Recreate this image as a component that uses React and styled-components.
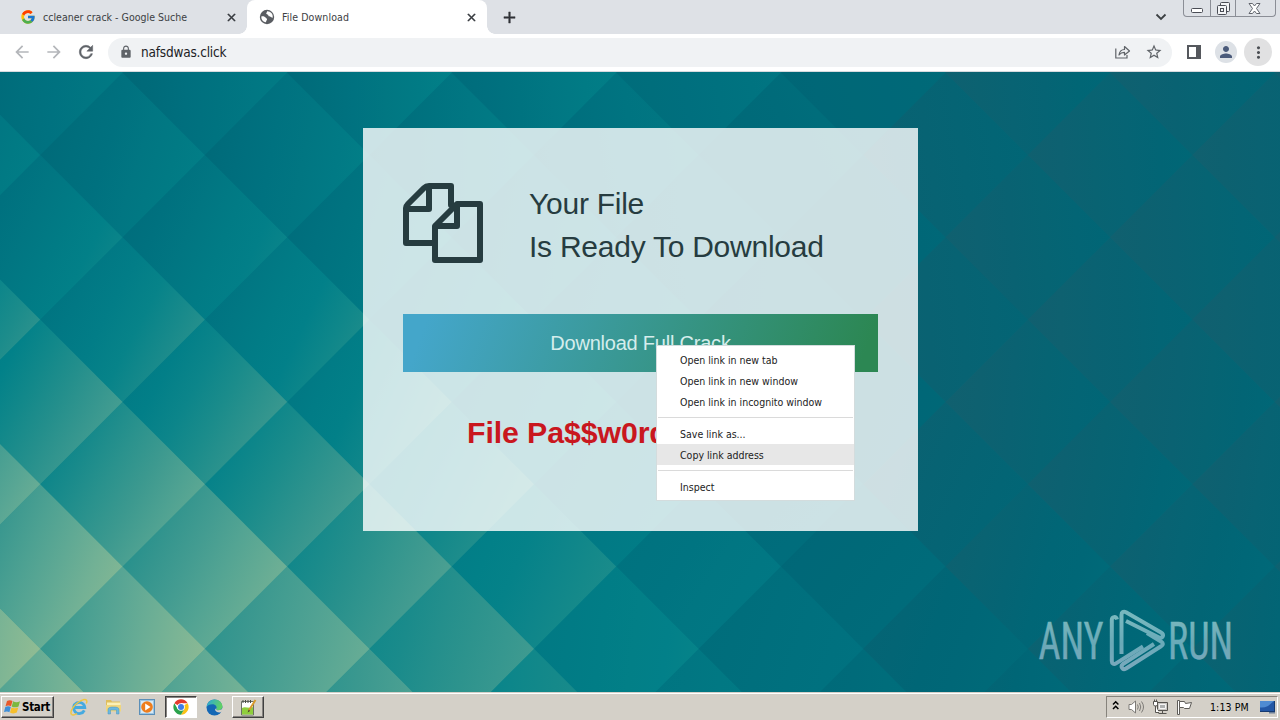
import React from 'react'
import styled, { createGlobalStyle, css } from 'styled-components'
import { FcGoogle } from 'react-icons/fc'
import {
    MdArrowBack,
    MdArrowForward,
    MdRefresh,
    MdLock,
    MdStarBorder,
    MdPerson,
    MdMoreVert,
    MdClose,
    MdAdd,
} from 'react-icons/md'

const GlobalStyle = createGlobalStyle`
    * {
        box-sizing: border-box;
    }
    body {
        margin: 0;
        overflow: hidden;
        font-family: 'DejaVu Sans Condensed', 'DejaVu Sans', sans-serif;
        font-stretch: condensed;
        font-size: 10.5px;
        color: #222;
    }
    svg {
        display: block;
        flex-shrink: 0;
    }
`

const Screen = styled.div`
    width: 1280px;
    height: 720px;
    display: flex;
    flex-direction: column;
    overflow: hidden;
`

/* ---------- browser chrome ---------- */

const TabStrip = styled.div`
    height: 34px;
    background: #dee1e6;
    display: flex;
    align-items: stretch;
`

const Tab = styled.div`
    position: relative;
    display: flex;
    align-items: center;
    width: ${(p) => (p.$active ? 240 : 247)}px;
    padding: 0 9px 0 ${(p) => (p.$active ? 12 : 20)}px;
    background: ${(p) => (p.$active ? '#fff' : 'transparent')};
    border-radius: 8px 8px 0 0;
    color: #3c4043;
    ${(p) =>
        p.$active &&
        css`
            /* little feet that flow into the toolbar */
            &::before,
            &::after {
                content: '';
                position: absolute;
                bottom: 0;
                width: 8px;
                height: 8px;
            }
            &::before {
                left: -8px;
                background: radial-gradient(circle at 0 0, #dee1e6 7.5px, #fff 8px);
            }
            &::after {
                right: -8px;
                background: radial-gradient(circle at 100% 0, #dee1e6 7.5px, #fff 8px);
            }
        `}
    > svg:last-child {
        margin-left: auto;
    }
    > svg:last-child path:last-child {
        stroke: #33363b;
        stroke-width: 1px;
    }
`

const TabTitle = styled.span`
    margin-left: 7px;
    line-height: 34px;
    white-space: nowrap;
    letter-spacing: ${(p) => p.$track || 0}px;
`

const NewTab = styled.div`
    width: 44px;
    display: grid;
    place-items: center;
    color: #303238;
    path:last-child {
        stroke: #303238;
        stroke-width: 0.6px;
    }
`

const StripEnd = styled.div`
    margin-left: auto;
    display: flex;
    margin-right: 4px;
    gap: 16px;
    > svg {
        margin-top: 11px;
    }
`

const WindowButtons = styled.div`
    display: grid;
    grid-template-columns: 26px 25px 42px;
    width: 93px;
    height: 17px;
    border: 1px solid #8b8e96;
    border-top: 0;
    border-radius: 0 0 4px 4px;
    > div {
        display: grid;
        place-items: center;
    }
    > div + div {
        border-left: 1px solid #8b8e96;
    }
`

const Toolbar = styled.div`
    height: 38px;
    background: #fff;
    border-bottom: 1px solid #d7dade;
    display: flex;
    align-items: center;
    padding: 0 8px 1px 12px;
`

const NavIcons = styled.div`
    display: flex;
    align-items: center;
    gap: 12px;
    width: 96px;
    color: #5f6368;
    .dim {
        color: #b4b6ba;
    }
    > svg:last-child path:last-child {
        stroke: #5f6368;
        stroke-width: 0.6px;
    }
`

const Omnibox = styled.div`
    flex: 1;
    height: 29px;
    border-radius: 15px;
    background: #f0f2f4;
    display: flex;
    align-items: center;
    padding: 0 9px 0 11px;
    color: #5f6368;
    .star {
        margin-left: 14px;
    }
`

const Url = styled.span`
    flex: 1;
    margin-left: 8px;
    font-size: 13.5px;
    letter-spacing: -0.2px;
    color: #202124;
`

const RoundButton = styled.div`
    width: ${(p) => p.$size}px;
    height: ${(p) => p.$size}px;
    border-radius: 50%;
    display: grid;
    place-items: center;
    background: ${(p) => p.$bg};
    color: ${(p) => p.$color};
    margin-left: ${(p) => p.$gap}px;
`

/* ---------- page ---------- */

const Page = styled.main`
    position: relative;
    height: 620px;
    padding-top: 56px;
    overflow: hidden;
    background: #00747f;
    > .wallpaper {
        position: absolute;
        inset: 0;
    }
`

const Card = styled.section`
    position: relative;
    width: 555px;
    height: 403px;
    margin-left: 363px;
    padding: 54px 40px 0;
    background: rgba(255, 255, 255, 0.8);
    font-family: 'Liberation Sans', Arial, sans-serif;
`

const CardHead = styled.div`
    display: flex;
    height: 132px;
    > svg {
        margin-top: 1px;
    }
`

const Heading = styled.h1`
    margin: 0 0 0 46px;
    font-size: 30px;
    font-weight: 400;
    line-height: 43px;
    letter-spacing: -0.25px;
    color: #263c40;
    white-space: pre-line;
`

const DownloadButton = styled.div`
    height: 58px;
    line-height: 58px;
    text-align: center;
    font-size: 20px;
    letter-spacing: -0.22px;
    color: #d5edec;
    background: linear-gradient(110deg, #44a6ca 5%, #2c8753 96%);
`

const Password = styled.p`
    margin: 43px 0 0 64px;
    line-height: 36px;
    font-size: 30.3px;
    font-weight: 700;
    letter-spacing: -0.1px;
    color: #c9171e;
`

const Menu = styled.div`
    position: absolute;
    left: 656px;
    top: 273px;
    width: 199px;
    height: 156px;
    padding: 3px 0 2px;
    background: #fff;
    border: 1px solid #d3dcdd;
`

const MenuItem = styled.div`
    height: 21px;
    line-height: 20px;
    padding: 1px 0 0 23px;
    color: #1c1c1c;
    white-space: nowrap;
    background: ${(p) => (p.$hover ? '#e7e7e7' : 'transparent')};
`

const Separator = styled.hr`
    margin: 5px 1px;
    border: 0;
    height: 1px;
    background: #dadada;
`

const Watermark = styled.div`
    position: absolute;
    left: 1036px;
    top: 534px;
    opacity: 0.75;
`

/* ---------- taskbar ---------- */

const raised = css`
    border: 1px solid;
    border-color: #fff #404040 #404040 #fff;
    box-shadow: inset -1px -1px 0 #868380;
`

const Taskbar = styled.footer`
    height: 28px;
    background: #d4d0c8;
    border-top: 1px solid #d4d0c8;
    box-shadow: inset 0 1px 0 #fff;
    display: flex;
    align-items: flex-start;
    padding: 3px 2px 0 1px;
`

const StartButton = styled.div`
    ${raised}
    width: 53px;
    height: 22px;
    margin-right: 8px;
    display: flex;
    align-items: center;
    padding-left: 2px;
    font-weight: 700;
    font-size: 11.5px;
    letter-spacing: -0.3px;
    color: #000;
`

const Launcher = styled.div`
    width: 34px;
    height: 22px;
    display: grid;
    place-items: center;
`

const TaskButton = styled(Launcher)`
    width: 32px;
    margin-left: 1px;
    ${(p) =>
        p.$pressed
            ? css`
                  background: #fff;
                  border: 1px solid;
                  border-color: #404040 #fff #fff #404040;
                  box-shadow: inset 1px 1px 0 #868380;
              `
            : raised}
`

const Tray = styled.div`
    margin-left: auto;
    width: 172px;
    height: 22px;
    display: flex;
    align-items: center;
    border: 1px solid;
    border-color: #86837c #fff #fff #86837c;
    padding-left: 5px;
    font-size: 10.5px;
    color: #000;
`

const Clock = styled.span`
    width: 60px;
    padding-left: 17px;
    white-space: nowrap;
    letter-spacing: 0.1px;
`

/* ---------- wallpaper ---------- */

const RAMP = [
    [0, [21, 94, 109]],
    [0.15, [0, 102, 118]],
    [0.3, [0, 113, 127]],
    [0.5, [2, 129, 137]],
    [0.6, [28, 140, 139]],
    [0.7, [58, 152, 143]],
    [0.8, [88, 166, 148]],
    [0.9, [120, 179, 149]],
    [1, [148, 189, 147]],
    [1.1, [166, 194, 148]],
]

function ramp(t) {
    if (t <= 0) t = 0
    for (let i = 1; i < RAMP.length; i++) {
        const [t1, c1] = RAMP[i]
        const [t0, c0] = RAMP[i - 1]
        if (t <= t1) {
            const f = (t - t0) / (t1 - t0)
            return `rgb(${c0.map((v, k) => Math.round(v + (c1[k] - v) * f)).join(',')})`
        }
    }
    return 'rgb(166,194,148)'
}

// coarse light map of the wallpaper, sampled bilinearly
const XS = [0, 200, 450, 620, 780, 950, 1280]
const YS = [0, 128, 248, 378, 494, 618]
const LIGHT = [
    [0.29, 0.3, 0.36, 0.34, 0.24, 0.11, 0.09],
    [0.35, 0.35, 0.34, 0.3, 0.2, 0.1, 0.09],
    [0.5, 0.48, 0.43, 0.33, 0.18, 0.09, 0.09],
    [0.66, 0.62, 0.53, 0.38, 0.21, 0.09, 0.1],
    [0.8, 0.76, 0.61, 0.44, 0.26, 0.13, 0.12],
    [0.86, 0.84, 0.66, 0.46, 0.29, 0.17, 0.14],
]

function locate(arr, v) {
    const c = Math.min(Math.max(v, arr[0]), arr[arr.length - 1])
    let i = 0
    while (i < arr.length - 2 && c > arr[i + 1]) i++
    return [i, (c - arr[i]) / (arr[i + 1] - arr[i])]
}

function light(x, y) {
    const [i, fx] = locate(XS, x)
    const [j, fy] = locate(YS, y)
    const a = LIGHT[j][i] * (1 - fx) + LIGHT[j][i + 1] * fx
    const b = LIGHT[j + 1][i] * (1 - fx) + LIGHT[j + 1][i + 1] * fx
    return a * (1 - fy) + b * fy
}

const STEP = 82.3
const DIAMONDS = []
for (let i = -1; i < 17; i++) {
    for (let j = -2; j < 9; j++) {
        if ((i + j) % 2 === 0) continue
        DIAMONDS.push({ id: `d${i}_${j + 2}`, x: 40.6 + i * STEP, y: 83 + j * STEP })
    }
}

function Wallpaper() {
    return (
        <svg className="wallpaper" width="1280" height="620">
            {DIAMONDS.map(({ id, x, y }) => {
                const mid = light(x, y)
                const amp = Math.min(0.15, 0.04 + mid * 0.25)
                const gx = (light(x + STEP, y) - light(x - STEP, y)) / 2 + amp
                const gy = ((light(x, y + STEP) - light(x, y - STEP)) / 2) * 0.8
                const len = Math.hypot(gx, gy) || 0.01
                const ux = gx / len
                const uy = gy / len
                return (
                    <g key={id}>
                        <linearGradient
                            id={id}
                            gradientUnits="userSpaceOnUse"
                            x1={x - ux * STEP}
                            y1={y - uy * STEP}
                            x2={x + ux * STEP}
                            y2={y + uy * STEP}
                        >
                            {[0, 0.2, 0.4, 0.6, 0.8, 1].map((s) => (
                                <stop key={s} offset={s} stopColor={ramp(mid + (s * 2 - 1) * len)} />
                            ))}
                        </linearGradient>
                        <path
                            d={`M${x - STEP - 0.4} ${y}L${x} ${y - STEP - 0.4}L${x + STEP + 0.4} ${y}L${x} ${y + STEP + 0.4}Z`}
                            fill={`url(#${id})`}
                        />
                    </g>
                )
            })}
        </svg>
    )
}

/* ---------- drawings ---------- */

const GlobeIcon = () => (
    <svg width="16" height="16" viewBox="0 0 16 16">
        <circle cx="8" cy="8" r="7.200" fill="#5a5d62" />
        <path d="M2.300 7.500C4 7 6 7.500 7 9C8 9.500 8.500 10.500 7.500 11.500C7 12.500 7 13.500 6.300 13.300C3.800 12.700 2 10.500 2.300 7.500Z" fill="#fff" />
        <path d="M8 2.200C9.500 2 11.500 2.800 12.600 4.200C13.600 5.400 13.900 7 13.700 8.600C12.700 9.300 12.500 8 11.500 7.800C10.300 7.600 9.500 7.500 9.300 6.300C9.300 5.300 7.500 5.500 7.200 4.500C7 3.500 8.500 3.300 8 2.200Z" fill="#fff" />
    </svg>
)

const FilesIcon = () => (
    <svg
        width="80"
        height="80"
        viewBox="0 0 80 80"
        fill="none"
        stroke="#263c40"
        strokeWidth="6"
        strokeLinejoin="round"
        strokeLinecap="round"
    >
        <path d="M30 60H3V25C3 24 4 22 5 21L21 5C22 4 24 3 26 3H48V22" />
        <path d="M26 4V26H4" />
        <path d="M32 43L54 21H77V77H32Z" />
        <path d="M54 22V43H33" />
    </svg>
)

const WatermarkLogo = () => (
    <svg width="240" height="70" viewBox="0 0 240 70">
        <defs>
            <linearGradient id="wm" x1="0" y1="0" x2="0" y2="68" gradientUnits="userSpaceOnUse">
                <stop offset="0.2" stopColor="#9fd2d6" />
                <stop offset="0.55" stopColor="#8cc0ce" />
                <stop offset="0.9" stopColor="#a2bfd4" />
            </linearGradient>
        </defs>
        <g fill="url(#wm)" stroke="url(#wm)" strokeWidth="0.4" fontFamily="Roboto, sans-serif" fontSize="52">
            <text x="2.500" y="53" textLength="65" lengthAdjust="spacingAndGlyphs">
                ANY
            </text>
            <text x="132" y="53" textLength="65" lengthAdjust="spacingAndGlyphs">
                RUN
            </text>
        </g>
        <g fill="none" stroke="url(#wm)" strokeWidth="4" strokeLinejoin="round">
            <path d="M81 13.500C80 10 75.800 10.500 75.800 14V55C75.800 58 78 58.600 80 57.400L107 40.500" />
            <path d="M85.500 48V9C85.500 6 87.500 5 90 6.200L125 26.500C128.500 28.500 127 33 123 31.500L90 15" />
            <path d="M111 27L125 35.500C127.500 37 127.500 38.800 125 40.300L90 62.500C86.500 64.500 84 60.500 87 58L118 38" />
        </g>
    </svg>
)

const ShareIcon = () => (
    <svg width="16" height="16" viewBox="0 0 16 16" fill="none" stroke="#5f6368" strokeWidth="1.2">
        <path d="M.8 4.500V14H12V11" />
        <path d="M4 11C4.500 7.500 6.500 5.500 9.500 5.500V2.500L14.500 7L9.500 11V8.300C7 8.200 5.500 9 4 11Z" strokeLinejoin="round" />
    </svg>
)

const SidePanelIcon = () => (
    <svg width="14" height="14" viewBox="0 0 14 14">
        <path d="M1 1H13V13H1Z" fill="none" stroke="#55585d" strokeWidth="2" />
        <path d="M9 0H14V14H9Z" fill="#55585d" />
    </svg>
)

const MinimizeIcon = () => (
    <svg width="12" height="5" style={{ marginTop: 5 }}>
        <rect x="0.500" y="0.500" width="11" height="4" rx="1" fill="#fff" stroke="#4a4d55" />
    </svg>
)

const RestoreIcon = () => (
    <svg width="13" height="13" fill="#f3f4f6" stroke="#4a4d55">
        <rect x="3.500" y="0.500" width="9" height="9" rx="1" />
        <rect x="0.500" y="3.500" width="9" height="9" rx="1" />
        <rect x="3.500" y="6.500" width="3" height="3" />
    </svg>
)

const CloseWindowIcon = () => (
    <svg width="13" height="11" viewBox="0 0 13 11" fill="#fff" stroke="#62656d" style={{ marginRight: 4 }}>
        <path d="M1 .5H4.500L6.500 3L8.500 .5H12L8.500 5.500L12 10.500H8.500L6.500 8L4.500 10.500H1L4.500 5.500Z" />
    </svg>
)

const WindowsFlag = () => (
    <svg width="18" height="16" viewBox="0 0 18 16">
        <path d="M3 2C5 .8 7 1 8.500 2L7 7.300C5.500 6.300 3.500 6.200 1.500 7.200Z" fill="#e8592a" />
        <path d="M9.200 2.300C11 3.400 13.500 3.500 16 2.300L14.500 7.500C12 8.700 9.500 8.600 7.700 7.500Z" fill="#7cb83f" />
        <path d="M1.300 8C3.500 7 5.300 7.200 6.800 8.100L5.400 13.200C4 12.200 2 12.100 0 13.100Z" fill="#3f8fd8" />
        <path d="M7.500 8.400C9.500 9.500 12 9.500 14.300 8.400L12.800 13.600C10.500 14.800 8 14.600 6 13.500Z" fill="#f6bf2d" />
    </svg>
)

const IeIcon = () => (
    <svg width="18" height="18" viewBox="0 0 18 18" fill="none">
        <path d="M14.300 12.300A5.600 5.600 0 1 1 14.800 9.500H5" stroke="#45aae0" strokeWidth="2.800" />
        <path d="M1.500 16.500C-1 13 6 4 13 1.800C17 .8 17.500 3 16.300 5.500" stroke="#f0c63f" strokeWidth="1.400" />
        <path d="M1.500 16.500C3 17.600 5.500 16.500 7 15.500" stroke="#f0c63f" strokeWidth="1.400" />
    </svg>
)

const FolderIcon = () => (
    <svg width="17" height="16" viewBox="0 0 17 16">
        <path d="M1 1H6L7 2.500H15V12H1Z" fill="#dfbd5c" />
        <path d="M2 3.500H15.500V8H2Z" fill="#fbf0b6" />
        <path d="M1 6H16V12.500H1Z" fill="#f0d67e" />
        <path d="M3 15V10.500C3 8.500 5 8 8.500 8S14 8.500 14 10.500V15H11.500V11H5.500V15Z" fill="#6cb8df" stroke="#4b95bd" strokeWidth=".5" />
    </svg>
)

const PlayerIcon = () => (
    <svg width="16" height="16" viewBox="0 0 16 16">
        <rect x=".5" y=".5" width="15" height="15" fill="#9cc6e4" stroke="#5b8fb8" />
        <rect x="2" y="2" width="12" height="12" fill="#d8e9f4" />
        <circle cx="8" cy="8" r="5.800" fill="#ee7d1c" />
        <path d="M6.200 4.600L11.500 8L6.200 11.400Z" fill="#fff" />
    </svg>
)

const ChromeIcon = () => (
    <svg width="16" height="16" viewBox="0 0 48 48">
        <path d="M24 24L4.100 12.500A23 23 0 0 1 43.900 12.500H24Z" fill="#e33b2e" />
        <path d="M24 24L43.900 12.500A23 23 0 0 1 24 47L34 30Z" fill="#fbc116" />
        <path d="M24 24L24 47A23 23 0 0 1 4.100 12.500L14 30L34 30L24 47Z" fill="#2ba24c" />
        <circle cx="24" cy="24" r="11.500" fill="#fff" />
        <circle cx="24" cy="24" r="9" fill="#3f7de8" />
    </svg>
)

const EdgeIcon = () => (
    <svg width="17" height="17" viewBox="0 0 17 17">
        <defs>
            <linearGradient id="edge" x1="0" y1="0" x2="1" y2="0.300">
                <stop offset="0" stopColor="#2ba6dc" />
                <stop offset="1" stopColor="#61d065" />
            </linearGradient>
        </defs>
        <circle cx="8.500" cy="8.500" r="8" fill="#1467b5" />
        <path d="M.6 8C1 3.500 4.500 .5 8.500 .5C13 .5 16.500 3.800 16.500 7.600C16.500 10 14.500 11.300 12.300 11.300C10.500 11.300 9.800 10.600 10.500 9.500C11 7.500 9.500 5.200 6.500 5.200C3.500 5.200 1.300 6.500 .6 8Z" fill="url(#edge)" />
        <path d="M10.500 9.500C9.800 10.600 10.500 11.300 12.300 11.300C14.500 11.300 16.500 10.400 17 8V11.500L15.500 13C13.500 14 10.500 13.500 9.300 11.500C8.800 10.300 9.500 9 10.500 9.500Z" fill="#d4d0c8" />
    </svg>
)

const NotepadIcon = () => (
    <svg width="17" height="17" viewBox="0 0 17 17">
        <path d="M1.500 2.500H13.500V16H1.500Z" fill="#fff" stroke="#6b6f66" />
        <path d="M2 9C5 7 9 10 13 8V15.500H2Z" fill="#8fce3c" />
        <path d="M3 1V4M5.500 1V4M8 1V4M10.500 1V4" stroke="#4a4f48" />
        <path d="M15.500 1L8.500 12" stroke="#d99b2b" strokeWidth="2" />
        <path d="M8.800 10.500L7.600 13.500L10 12Z" fill="#3b3b30" />
    </svg>
)

const TrayIcons = () => (
    <>
        <svg width="8" height="11" viewBox="0 0 8 11" fill="none" stroke="#000" strokeWidth="1.500" style={{ marginBottom: 3 }}>
            <path d="M1 4.500L3.700 1.800L6.400 4.500M1 9L3.700 6.300L6.400 9" />
        </svg>
        <svg width="17" height="14" viewBox="0 0 17 14" fill="none" stroke="#7c7a76" style={{ marginLeft: 8 }}>
            <path d="M1 4.500H3.500L7.500 1V13L3.500 9.500H1Z" fill="#fff" />
            <path d="M9.500 4.500Q11 7 9.500 9.500M11.500 3Q14 7 11.500 11M13.500 1.500Q17.500 7 13.500 12.500" />
        </svg>
        <svg width="17" height="16" viewBox="0 0 17 16" fill="none" stroke="#55534f" style={{ marginLeft: 7 }}>
            <path d="M5.500 3.500H15.500V11.500H5.500Z" fill="#c9c7c3" />
            <path d="M7.500 5.500H13.500V9.500H7.500Z" fill="#aeb0b0" stroke="#f6f6f6" />
            <path d="M10.500 12V14M6.500 14.500H14.500" />
            <path d="M1.500 2.500H5.500V5.500L4.500 7H2.500L1.500 5.500ZM2.500 .5V2.500M4.500 .5V2.500M3.500 7V13.500H7" fill="#fff" />
        </svg>
        <svg width="17" height="15" viewBox="0 0 17 15" stroke="#5e5c58" style={{ marginLeft: 7 }}>
            <path d="M1.500 .5H3.500V14.500H1.500Z" fill="#fff" />
            <path d="M3.500 1.500H8.500L9.500 3.500L15.500 2.500L13.500 8.500H8.500L7.500 7.500H3.500Z" fill="#fff" />
        </svg>
    </>
)

const DesktopIcon = () => (
    <svg width="16" height="14" viewBox="0 0 16 14" style={{ marginLeft: 7 }}>
        <path d="M0 1H14V11H0Z" fill="#2357a5" />
        <path d="M0 1H14L8 6Q4 8 0 7.500Z" fill="#4f8bd2" />
        <path d="M14 1H15V12H0V11H14Z" fill="#163a70" />
        <path d="M9 12H15V13.500H9Z" fill="#6c7f99" />
    </svg>
)

export default function App() {
    return (
        <Screen>
            <GlobalStyle />
            <TabStrip>
                <Tab>
                    <FcGoogle size={16} />
                    <TabTitle $track={0.02}>ccleaner crack - Google Suche</TabTitle>
                    <MdClose size={13} color="#33363b" />
                </Tab>
                <Tab $active>
                    <GlobeIcon />
                    <TabTitle $track={0.1}>File Download</TabTitle>
                    <MdClose size={13} color="#33363b" />
                </Tab>
                <NewTab>
                    <MdAdd size={19} />
                </NewTab>
                <StripEnd>
                    <svg width="12" height="12" viewBox="0 0 12 12" fill="none" stroke="#3c4043" strokeWidth="1.800">
                        <path d="M1.500 3.500L6 8L10.500 3.500" />
                    </svg>
                    <WindowButtons>
                        <div>
                            <MinimizeIcon />
                        </div>
                        <div>
                            <RestoreIcon />
                        </div>
                        <div>
                            <CloseWindowIcon />
                        </div>
                    </WindowButtons>
                </StripEnd>
            </TabStrip>
            <Toolbar>
                <NavIcons>
                    <MdArrowBack className="dim" size={20} />
                    <MdArrowForward className="dim" size={20} />
                    <MdRefresh size={20} />
                </NavIcons>
                <Omnibox>
                    <MdLock size={14} />
                    <Url>nafsdwas.click</Url>
                    <ShareIcon />
                    <MdStarBorder className="star" size={18} />
                </Omnibox>
                <RoundButton $size={15} $bg="transparent" $gap={14}>
                    <SidePanelIcon />
                </RoundButton>
                <RoundButton $size={22} $bg="#dde1e6" $color="#4a5a7a" $gap={14}>
                    <MdPerson size={18} />
                </RoundButton>
                <RoundButton $size={28} $bg="#e1e1e2" $color="#4b4e53" $gap={7}>
                    <MdMoreVert size={19} />
                </RoundButton>
            </Toolbar>

            <Page>
                <Wallpaper />
                <Card>
                    <CardHead>
                        <FilesIcon />
                        <Heading>{'Your File\nIs Ready To Download'}</Heading>
                    </CardHead>
                    <DownloadButton>Download Full Crack</DownloadButton>
                    <Password>File Pa$$w0rd</Password>
                </Card>
                <Watermark>
                    <WatermarkLogo />
                </Watermark>
                <Menu>
                    <MenuItem>Open link in new tab</MenuItem>
                    <MenuItem>Open link in new window</MenuItem>
                    <MenuItem>Open link in incognito window</MenuItem>
                    <Separator />
                    <MenuItem>Save link as...</MenuItem>
                    <MenuItem $hover>Copy link address</MenuItem>
                    <Separator />
                    <MenuItem>Inspect</MenuItem>
                </Menu>
            </Page>

            <Taskbar>
                <StartButton>
                    <WindowsFlag />
                    Start
                </StartButton>
                <Launcher>
                    <IeIcon />
                </Launcher>
                <Launcher>
                    <FolderIcon />
                </Launcher>
                <Launcher>
                    <PlayerIcon />
                </Launcher>
                <TaskButton $pressed>
                    <ChromeIcon />
                </TaskButton>
                <Launcher>
                    <EdgeIcon />
                </Launcher>
                <TaskButton>
                    <NotepadIcon />
                </TaskButton>
                <Tray>
                    <TrayIcons />
                    <Clock>1:13 PM</Clock>
                    <DesktopIcon />
                </Tray>
            </Taskbar>
        </Screen>
    )
}
